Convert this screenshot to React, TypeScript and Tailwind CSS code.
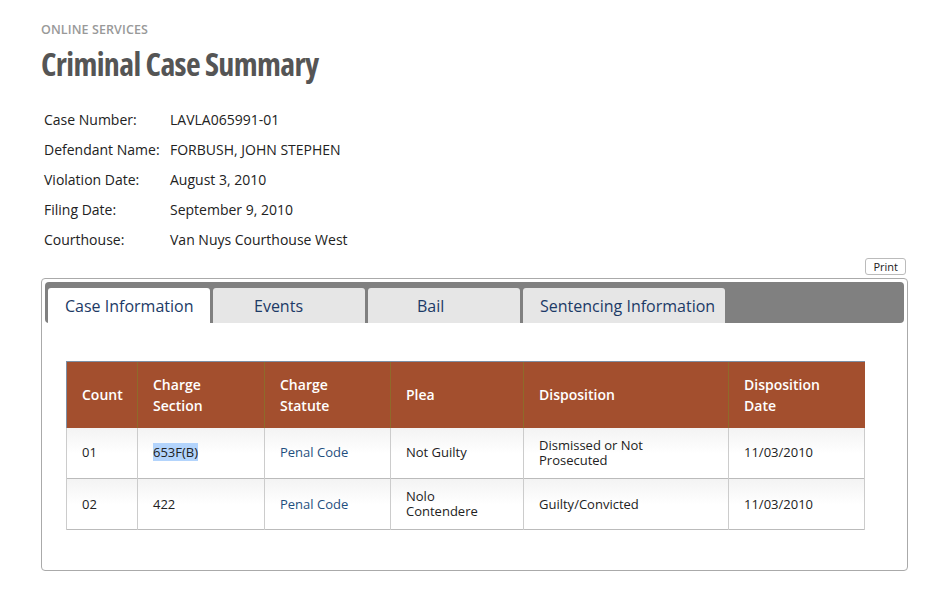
import React from "react";

const details = [
  ["Case Number:", "LAVLA065991-01"],
  ["Defendant Name:", "FORBUSH, JOHN STEPHEN"],
  ["Violation Date:", "August 3, 2010"],
  ["Filing Date:", "September 9, 2010"],
  ["Courthouse:", "Van Nuys Courthouse West"],
];

// tab labels sit a little left of centre in the original, so pad each one
const tabs = [
  { label: "Case Information", cls: "w-[162px] pl-[17px]", active: true },
  { label: "Events", cls: "w-[152px] pl-[41px]" },
  { label: "Bail", cls: "w-[152px] pl-[49px]" },
  { label: "Sentencing Information", cls: "w-[202px] pl-[17px]" },
];

const rows = [
  { count: "01", section: "653F(B)", statute: "Penal Code", plea: "Not Guilty", disp: "Dismissed or Not Prosecuted", date: "11/03/2010", hl: true },
  { count: "02", section: "422", statute: "Penal Code", plea: "Nolo Contendere", disp: "Guilty/Convicted", date: "11/03/2010" },
];

export default function App() {
  return (
    <div className="min-h-screen bg-white font-['Open_Sans',sans-serif] text-[#222]">
      <div className="pl-[41px] pr-[36px] pt-[22px]">
        <div className="text-[12.5px] font-semibold uppercase leading-4 tracking-[0.1px] text-[#999]">
          Online Services
        </div>
        <h1 className="mt-[6px] text-[32px] font-bold leading-10 tracking-[-0.65px] text-[#555] [font-stretch:75%]">
          Criminal Case Summary
        </h1>

        {/* case details */}
        <div className="mt-[20px] pl-[3px]">
          {details.map(([k, v]) => (
            <div key={k} className="flex h-[30px] items-center text-[14px]">
              <span className="w-[126px]">{k}</span>
              <span>{v}</span>
            </div>
          ))}
        </div>

        <div className="mt-[4px] flex justify-end pr-[2px]">
          <button className="h-[17px] rounded-[3px] border border-[#bbb] bg-white px-[7px] text-[11px] leading-[15px] text-[#222]">
            Print
          </button>
        </div>

        {/* tab panel */}
        <div className="mt-[3px] h-[293px] rounded-[4px] border border-[#aaa] p-[3px]">
          <div className="flex h-[41px] items-end gap-[3px] rounded-[4px] bg-[#808080] px-[3px]">
            {tabs.map((t) => (
              <div
                key={t.label}
                className={`${t.cls} flex h-[35px] items-center rounded-t-[3px] text-[16px] text-[#1c3a66] ${
                  t.active ? "bg-white" : "bg-[#e6e6e6]"
                }`}
              >
                {t.label}
              </div>
            ))}
          </div>

          <div className="px-[21px] pt-[38px]">
            <table className="w-[799px] border-collapse text-[13px]">
              <thead>
                <tr className="h-[66px] bg-[#a34f2e] text-left text-[14px] font-semibold leading-[21px] text-white">
                  <th className="w-[71px] border-l border-t border-[#7d8fa5] pl-[15px] font-semibold">Count</th>
                  <th className="w-[127px] border-l border-t border-l-[#8f6a2a] border-t-[#7d8fa5] pl-[15px] font-semibold">
                    Charge
                    <br />
                    Section
                  </th>
                  <th className="w-[126px] border-l border-t border-l-[#8f6a2a] border-t-[#7d8fa5] pl-[15px] font-semibold">
                    Charge
                    <br />
                    Statute
                  </th>
                  <th className="w-[133px] border-l border-t border-l-[#8f6a2a] border-t-[#7d8fa5] pl-[15px] font-semibold">Plea</th>
                  <th className="w-[205px] border-l border-t border-l-[#8f6a2a] border-t-[#7d8fa5] pl-[15px] font-semibold">Disposition</th>
                  <th className="border-l border-t border-l-[#8f6a2a] border-t-[#7d8fa5] pl-[15px] font-semibold">
                    Disposition
                    <br />
                    Date
                  </th>
                </tr>
              </thead>
              <tbody>
                {rows.map((r) => (
                  <tr
                    key={r.count}
                    className="h-[51px] border-b border-[#bbb] bg-gradient-to-b from-[#f3f3f3] via-white to-white leading-[15px]"
                  >
                    <td className="border-l border-[#ccc] pl-[15px]">{r.count}</td>
                    <td className="border-l border-[#ccc] pl-[15px]">
                      <span className={r.hl ? "bg-[#b3d4fc]" : ""}>{r.section}</span>
                    </td>
                    <td className="border-l border-[#ccc] pl-[15px] text-[#1f4f80]">{r.statute}</td>
                    <td className="border-l border-[#ccc] pl-[15px] pr-[30px]">{r.plea}</td>
                    <td className="border-l border-[#ccc] pl-[15px] pr-[50px]">{r.disp}</td>
                    <td className="border-x border-[#ccc] pl-[15px]">{r.date}</td>
                  </tr>
                ))}
              </tbody>
            </table>
          </div>
        </div>
      </div>
    </div>
  );
}
